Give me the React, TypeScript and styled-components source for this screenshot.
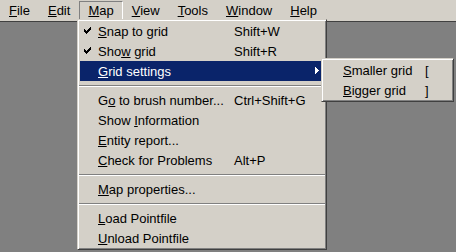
import React from 'react'
import styled, { createGlobalStyle } from 'styled-components'

const GlobalStyle = createGlobalStyle`
  html, body {
    margin: 0;
    padding: 0;
    background: #808080;
  }
  body {
    font-family: "Liberation Sans", Arial, sans-serif;
    font-size: 13px;
    color: #000;
  }
`

type Item = {
  label: string
  key: number
  shortcut?: string
  checked?: boolean
  active?: boolean
  submenu?: boolean
}

type Entry = Item | 'sep'

const barItems: { label: string; key: number; open?: boolean }[] = [
  { label: 'File', key: 0 },
  { label: 'Edit', key: 0 },
  { label: 'Map', key: 0, open: true },
  { label: 'View', key: 0 },
  { label: 'Tools', key: 0 },
  { label: 'Window', key: 0 },
  { label: 'Help', key: 0 },
]

const mapMenu: Entry[] = [
  { label: 'Snap to grid', key: 0, shortcut: 'Shift+W', checked: true },
  { label: 'Show grid', key: 3, shortcut: 'Shift+R', checked: true },
  { label: 'Grid settings', key: 0, active: true, submenu: true },
  'sep',
  { label: 'Go to brush number...', key: 1, shortcut: 'Ctrl+Shift+G' },
  { label: 'Show Information', key: 5 },
  { label: 'Entity report...', key: 0 },
  { label: 'Check for Problems', key: 0, shortcut: 'Alt+P' },
  'sep',
  { label: 'Map properties...', key: 0 },
  'sep',
  { label: 'Load Pointfile', key: 0 },
  { label: 'Unload Pointfile', key: 0 },
]

const gridMenu: Item[] = [
  { label: 'Smaller grid', key: 0, shortcut: '[' },
  { label: 'Bigger grid', key: 0, shortcut: ']' },
]

function Mnemonic({ text, at }: { text: string; at: number }) {
  return (
    <>
      {text.slice(0, at)}
      <u>{text[at]}</u>
      {text.slice(at + 1)}
    </>
  )
}

function Check() {
  return (
    <svg width="7" height="7" viewBox="0 0 7 7" shapeRendering="crispEdges">
      <path
        fill="#000"
        d="M6 0h1v3h-1v1h-1v1h-1v1h-1v1h-1v-1h-1v-1h-1v-3h1v1h1v1h1v-1h1v-1h1v-1h1z"
      />
    </svg>
  )
}

function Arrow() {
  return (
    <svg width="4" height="7" viewBox="0 0 4 7" shapeRendering="crispEdges">
      <path fill="#fff" d="M0 0h1v1h1v1h1v1h1v1h-1v1h-1v1h-1v1h-1z" />
    </svg>
  )
}

export default function App() {
  return (
    <Screen>
      <GlobalStyle />
      <MenuBar>
        {barItems.map((b) => (
          <BarItem key={b.label} $open={b.open}>
            <Mnemonic text={b.label} at={b.key} />
          </BarItem>
        ))}
      </MenuBar>
      <Client />
      <Dropdown>
        {mapMenu.map((e, i) =>
          e === 'sep' ? (
            <Separator key={'s' + i} />
          ) : (
            <Row key={e.label} $active={e.active}>
              <CheckSlot>{e.checked && <Check />}</CheckSlot>
              <Label>
                <Mnemonic text={e.label} at={e.key} />
              </Label>
              {e.shortcut && <Shortcut>{e.shortcut}</Shortcut>}
              {e.submenu && (
                <ArrowSlot>
                  <Arrow />
                </ArrowSlot>
              )}
              {e.submenu && (
                <SubMenu>
                  {gridMenu.map((s) => (
                    <SubRow key={s.label}>
                      <SubLabel>
                        <Mnemonic text={s.label} at={s.key} />
                      </SubLabel>
                      <span>{s.shortcut}</span>
                    </SubRow>
                  ))}
                </SubMenu>
              )}
            </Row>
          )
        )}
      </Dropdown>
    </Screen>
  )
}

const Screen = styled.div`
  position: relative;
  width: 456px;
  height: 252px;
  overflow: hidden;
  background: #808080;
  display: flex;
  flex-direction: column;
`

const MenuBar = styled.div`
  display: flex;
  height: 21px;
  box-sizing: border-box;
  padding: 1px 0 0 0;
  background: #d4d0c8;
`

const BarItem = styled.div<{ $open?: boolean }>`
  height: 19px;
  box-sizing: border-box;
  padding: 0 8px;
  line-height: 17px;
  border: 1px solid transparent;
  ${(p) => p.$open && 'border-color: #808080 #fff #fff #808080;'}
  white-space: nowrap;
`

const Client = styled.div`
  flex: 1;
  background: #808080;
  border-top: 1px solid #404040;
`

const Dropdown = styled.div`
  position: absolute;
  left: 77px;
  top: 19px;
  width: 250px;
  box-sizing: border-box;
  padding: 1px 2px;
  background: #d4d0c8;
  border: 1px solid;
  border-color: #d4d0c8 #404040 #404040 #d4d0c8;
  box-shadow: inset 1px 1px #fff, inset -1px -1px #808080;
`

const Row = styled.div<{ $active?: boolean }>`
  position: relative;
  display: flex;
  align-items: center;
  height: 20px;
  white-space: nowrap;
  background: ${(p) => (p.$active ? '#0a246a' : 'transparent')};
  color: ${(p) => (p.$active ? '#fff' : '#000')};
`

const CheckSlot = styled.span`
  width: 18px;
  display: flex;
  padding-left: 4px;
  box-sizing: border-box;
  margin-top: -1px;
`

const Label = styled.span`
  width: 136px;
`

const Shortcut = styled.span``

const ArrowSlot = styled.span`
  position: absolute;
  right: 5px;
  top: 6px;
  display: flex;
`

const Separator = styled.div`
  height: 9px;
  display: flex;
  align-items: center;
  &::before {
    content: '';
    flex: 1;
    margin: 0 -1px;
    border-top: 1px solid #808080;
    border-bottom: 1px solid #fff;
  }
`

const SubMenu = styled.div`
  position: absolute;
  left: 241px;
  top: -3px;
  width: 133px;
  box-sizing: border-box;
  padding: 1px 2px;
  color: #000;
  background: #d4d0c8;
  border: 1px solid;
  border-color: #d4d0c8 #404040 #404040 #d4d0c8;
  box-shadow: inset 1px 1px #fff, inset -1px -1px #808080;
`

const SubRow = styled.div`
  display: flex;
  align-items: center;
  height: 20px;
  padding-left: 19px;
  white-space: nowrap;
`

const SubLabel = styled.span`
  width: 82px;
`
